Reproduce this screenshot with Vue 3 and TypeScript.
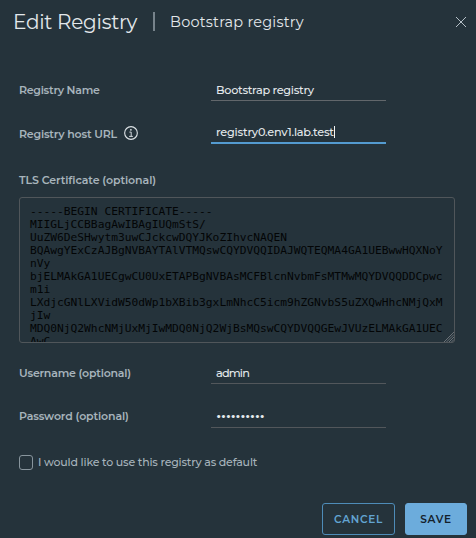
<script setup lang="ts">
import { ref } from 'vue'

const registryName = ref('Bootstrap registry')
const hostUrl = ref('registry0.env1.lab.test')
const username = ref('admin')
const passwordMask = '•'.repeat(10)
const useAsDefault = ref(false)

const certificate = ref(
  [
    '-----BEGIN CERTIFICATE-----',
    'MIIGLjCCBBagAwIBAgIUQmStS/',
    'UuZW6DeSHwytm3uwCJckcwDQYJKoZIhvcNAQEN',
    'BQAwgYExCzAJBgNVBAYTAlVTMQswCQYDVQQIDAJWQTEQMA4GA1UEBwwHQXNoY',
    'nVy',
    'bjELMAkGA1UECgwCU0UxETAPBgNVBAsMCFBlcnNvbmFsMTMwMQYDVQQDDCpwc',
    'm1i',
    'LXdjcGNlLXVidW50dWp1bXBib3gxLmNhcC5icm9hZGNvbS5uZXQwHhcNMjQxM',
    'jIw',
    'MDQ0NjQ2WhcNMjUxMjIwMDQ0NjQ2WjBsMQswCQYDVQQGEwJVUzELMAkGA1UEC',
    'AwC',
  ].join('\n'),
)
</script>

<template>
  <main class="modal">
    <header class="header">
      <h1 class="title">Edit Registry</h1>
      <span class="divider"></span>
      <h2 class="subtitle">Bootstrap registry</h2>
      <button class="close" aria-label="Close">
        <svg width="12" height="12" viewBox="0 0 12 12">
          <path d="M1 1 11 11M11 1 1 11" fill="none" stroke="currentColor" stroke-width="1" />
        </svg>
      </button>
    </header>

    <section class="form">
      <div class="row name">
        <span class="label l-name">Registry Name</span>
        <div class="input"><span class="v-name">{{ registryName }}</span></div>
      </div>
      <div class="row host">
        <span class="label l-host">Registry host URL</span>
        <svg class="info" width="14" height="14" viewBox="0 0 14 14">
          <circle cx="7" cy="7" r="6.35" fill="none" stroke="currentColor" stroke-width="1.1" />
          <circle cx="6.9" cy="3.8" r="0.9" fill="currentColor" />
          <path d="M5.4 6.1H7.2V10.3M5.1 10.4H8.9" fill="none" stroke="currentColor" stroke-width="0.95" />
        </svg>
        <div class="input focused"><span class="v-host">{{ hostUrl }}</span><i class="caret"></i></div>
      </div>
      <span class="label l-tls">TLS Certificate (optional)</span>
      <div class="certificate">
        <pre>{{ certificate }}</pre>
        <svg class="grip" width="10" height="10" viewBox="0 0 10 10">
          <path d="M0 10 10 0M2.5 10 10 2.5M5 10 10 5M7.5 10 10 7.5" stroke="currentColor" stroke-width="0.8" />
        </svg>
      </div>
      <div class="row user">
        <span class="label l-user">Username (optional)</span>
        <div class="input"><span class="v-user">{{ username }}</span></div>
      </div>
      <div class="row pass">
        <span class="label l-pass">Password (optional)</span>
        <div class="input"><span class="mask">{{ passwordMask }}</span></div>
      </div>
      <label class="check">
        <input v-model="useAsDefault" type="checkbox" />
        <span>I would like to use this registry as default</span>
      </label>
    </section>

    <footer class="footer">
      <button class="btn">CANCEL</button>
      <button class="btn primary">SAVE</button>
    </footer>
  </main>
</template>

<style>
body {
  margin: 0;
  background: #25333b;
}
</style>

<style scoped>
.modal {
  box-sizing: border-box;
  width: 476px;
  height: 538px;
  overflow: hidden;
  display: flex;
  flex-direction: column;
  background: #25333b;
  color: #e3e8eb;
  font-family: Metropolis, Montserrat, Inter, sans-serif;
  white-space: nowrap;
}
.header {
  display: flex;
  align-items: center;
  height: 43px;
  padding: 0 9px 0 13px;
}
h1,
h2 {
  margin: 0;
  font-weight: 400;
}
.title {
  width: 140px;
  font-size: 20px;
  letter-spacing: -0.26px;
}
.divider {
  width: 2px;
  height: 19px;
  background: #77838b;
}
.subtitle {
  margin-left: 15px;
  font-size: 14.5px;
  letter-spacing: 0.2px;
}
.close {
  display: flex;
  margin-left: auto;
  padding: 0;
  border: 0;
  background: none;
  color: #b5c0c7;
}
.form {
  display: flex;
  flex-direction: column;
  padding: 36px 20px 0 19px;
}
.row {
  display: flex;
  align-items: center;
  height: 22px;
}
.label {
  font-size: 11px;
  font-weight: 600;
  line-height: 20px;
  color: #a7b4bc;
}
.l-name {
  letter-spacing: -0.27px;
}
.l-host {
  letter-spacing: -0.2px;
}
.l-tls {
  margin-top: 26px;
  letter-spacing: -0.1px;
}
.l-user {
  letter-spacing: -0.22px;
}
.l-pass {
  letter-spacing: -0.15px;
}
.input {
  box-sizing: border-box;
  display: flex;
  align-items: center;
  width: 175px;
  height: 22px;
  margin-left: auto;
  margin-right: 70px;
  padding-left: 5px;
  border-bottom: 1px solid #62676b;
  font-size: 11.3px;
  font-weight: 500;
}
.v-name {
  letter-spacing: -0.3px;
}
.v-host {
  letter-spacing: -0.22px;
}
.v-user {
  letter-spacing: -0.85px;
}
.host {
  margin-top: 21px;
}
.host .label {
  padding-top: 1px;
}
.info {
  margin-left: 7px;
  color: #dce2e5;
}
.input.focused {
  border-bottom: 2px solid #549bd0;
}
.caret {
  width: 1px;
  height: 12px;
  background: #f2f5f6;
}
.certificate {
  position: relative;
  box-sizing: border-box;
  width: 436px;
  height: 146px;
  margin-top: 7px;
  padding: 8px 10px 0;
  overflow: hidden;
  border: 1px solid #50565a;
  border-radius: 3px;
}
pre {
  margin: 0;
  font: 11.24px/12.95px 'DejaVu Sans Mono', monospace;
  color: #030506;
}
.grip {
  position: absolute;
  right: 0;
  bottom: 0;
  color: #7c8286;
}
.user {
  margin-top: 19px;
}
.user .input,
.pass .input {
  border-color: #52575b;
}
.pass {
  margin-top: 21px;
}
.pass .input {
  height: 23px;
}
.mask {
  padding-bottom: 2px;
  font-size: 17px;
  font-weight: 500;
  line-height: 18px;
  letter-spacing: -0.5px;
}
.check {
  display: flex;
  align-items: center;
  gap: 5px;
  height: 16px;
  margin-top: 27px;
  font-size: 11px;
  font-weight: 500;
  letter-spacing: -0.18px;
  color: #a7b4bc;
}
.check input {
  appearance: none;
  box-sizing: border-box;
  width: 14px;
  height: 15px;
  margin: 0;
  border: 1px solid #88959d;
  border-radius: 3px;
}
.footer {
  display: flex;
  justify-content: flex-end;
  gap: 10px;
  margin-top: auto;
  padding: 0 9px 3px 0;
}
.btn {
  box-sizing: border-box;
  width: 73px;
  height: 32px;
  padding: 0;
  border: 1px solid #4e8cb8;
  border-radius: 3px;
  background: none;
  color: #62a4d2;
  font: 600 10.5px Montserrat, sans-serif;
  letter-spacing: 0.7px;
}
.btn.primary {
  width: 62px;
  border-color: #6cacdc;
  background: #6cacdc;
  color: #14212b;
}
</style>
